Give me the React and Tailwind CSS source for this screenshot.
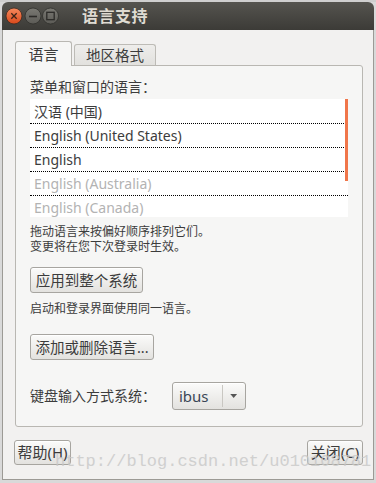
import React from "react";

const FONT = { fontFamily: '"Noto Sans", "Noto Sans CJK SC", sans-serif' };

function TitleButtons() {
  return (
    <svg width="62" height="20" viewBox="0 0 62 20" className="block">
      <defs>
        <linearGradient id="cg" x1="0" y1="0" x2="0" y2="1">
          <stop offset="0" stopColor="#f58a5e" />
          <stop offset="1" stopColor="#d9481a" />
        </linearGradient>
        <linearGradient id="gg" x1="0" y1="0" x2="0" y2="1">
          <stop offset="0" stopColor="#7a7973" />
          <stop offset="1" stopColor="#5c5b56" />
        </linearGradient>
      </defs>
      <circle cx="9" cy="10" r="8" fill="url(#cg)" stroke="#3a2a22" strokeWidth="0.8" />
      <path d="M6.3 7.3 L11.7 12.7 M11.7 7.3 L6.3 12.7" stroke="#3b2418" strokeWidth="1.3" />
      <circle cx="28" cy="10" r="8" fill="url(#gg)" stroke="#2f2e2b" strokeWidth="0.8" />
      <path d="M24 10.5 H32" stroke="#2c2b28" strokeWidth="1.6" />
      <circle cx="45.5" cy="10" r="8" fill="url(#gg)" stroke="#2f2e2b" strokeWidth="0.8" />
      <rect x="41.8" y="6.3" width="7.4" height="7.4" fill="none" stroke="#2c2b28" strokeWidth="1.3" />
    </svg>
  );
}

function Btn({ children, className = "" }) {
  return (
    <div
      className={
        "flex items-center justify-center rounded-[3px] border border-[#a7a5a0] bg-gradient-to-b from-[#fbfbfa] to-[#e3e2df] text-[#3c3c3c] shadow-[inset_0_1px_0_#ffffff] " +
        className
      }
    >
      {children}
    </div>
  );
}

const rows = [
  { t: "汉语 (中国)", dim: false },
  { t: "English (United States)", dim: false },
  { t: "English", dim: false },
  { t: "English (Australia)", dim: true },
  { t: "English (Canada)", dim: true },
];

export default function App() {
  return (
    <div className="relative h-[483px] w-[376px] overflow-hidden bg-[#d9d9d9]" style={FONT}>
      <div className="h-[2px] w-full bg-[#cfcfcf]" />
      <div className="ml-[2px] flex w-[372px] flex-col">
        {/* title bar */}
        <div className="flex h-[28px] items-center rounded-t-[6px] bg-gradient-to-b from-[#55544f] to-[#3c3b37] pl-[3px]">
          <TitleButtons />
          <span className="ml-[15px] text-[16px] font-bold leading-none tracking-[0.5px] text-[#dfdbd2]">语言支持</span>
        </div>
        {/* body */}
        <div className="flex h-[450px] flex-col border-x border-b border-[#9c9a95] bg-[#f2f1f0] pl-[12px] pr-[9px] pt-[11px]">
          {/* tabs */}
          <div className="relative z-10 flex items-end">
            <div className="-mb-px flex h-[25px] w-[57px] items-center justify-center rounded-t-[3px] border border-b-0 border-[#b9b7b2] bg-[#f6f6f5] text-[15px] leading-none text-[#3c3c3c]">
              语言
            </div>
            <div className="ml-[2px] flex h-[21px] w-[82px] items-center justify-center rounded-t-[3px] border border-b-0 border-[#bdbbb6] bg-gradient-to-b from-[#eeedeb] to-[#e2e1de] text-[14.5px] leading-none text-[#3c3c3c]">
              地区格式
            </div>
          </div>
          {/* panel */}
          <div className="flex h-[362px] w-[348px] flex-col rounded-b-[3px] rounded-tr-[3px] border border-[#b9b7b2] bg-[#f6f6f5] px-[14px] pt-[11px]">
            <div className="text-[14px] leading-[20px] text-[#3c3c3c]">菜单和窗口的语言：</div>
            <div className="relative mt-[2px] h-[118px] overflow-hidden bg-white pt-px">
              {rows.map((r, i) => (
                <div
                  key={i}
                  className={
                    "flex h-[24px] items-center border-b border-dotted border-black pl-[4px] text-[14px] " +
                    (r.dim ? "text-[#b3b3b3]" : "text-[#3c3c3c]")
                  }
                >
                  {r.t}
                </div>
              ))}
              <div className="absolute right-0 top-0 h-[82px] w-[3px] bg-[#f0764a]" />
            </div>
            <div className="mt-[7px] text-[12px] leading-[15px] text-[#3c3c3c]">
              <div>拖动语言来按偏好顺序排列它们。</div>
              <div>变更将在您下次登录时生效。</div>
            </div>
            <Btn className="mt-[13px] h-[26px] w-[113px] text-[14.5px] leading-none">应用到整个系统</Btn>
            <div className="mt-[8px] text-[12px] leading-[15px] text-[#3c3c3c]">启动和登录界面使用同一语言。</div>
            <Btn className="mt-[18px] h-[26px] w-[124px] text-[14.5px] leading-none">添加或删除语言...</Btn>
            <div className="mt-[22px] flex items-center">
              <span className="text-[14px] leading-none text-[#3c3c3c]">键盘输入方式系统：</span>
              <Btn className="ml-[16px] h-[28px] w-[74px] !justify-start">
                <span className="w-[50px] pl-[6px] text-[15px] leading-none text-[#3a4656]">ibus</span>
                <span className="h-[22px] w-px bg-[#c9c7c2]" />
                <svg width="23" height="8" viewBox="0 0 23 8">
                  <path d="M7.5 2 L14.5 2 L11 6 Z" fill="#555555" />
                </svg>
              </Btn>
            </div>
          </div>
          {/* bottom buttons */}
          <div className="mt-[13px] flex justify-between pr-px" style={{ marginLeft: -1 }}>
            <Btn className="h-[25px] w-[57px] text-[15px] leading-none">帮助(H)</Btn>
            <Btn className="h-[25px] w-[56px] text-[15px] leading-none">关闭(C)</Btn>
          </div>
        </div>
      </div>
      {/* watermark */}
      <div
        className="pointer-events-none absolute left-[55px] top-[452px] whitespace-nowrap text-[17px] leading-[20px] text-[#c8c8c8] opacity-80"
        style={{ fontFamily: '"Liberation Mono", monospace' }}
      >
        http://blog.csdn.net/u010108781
      </div>
    </div>
  );
}
